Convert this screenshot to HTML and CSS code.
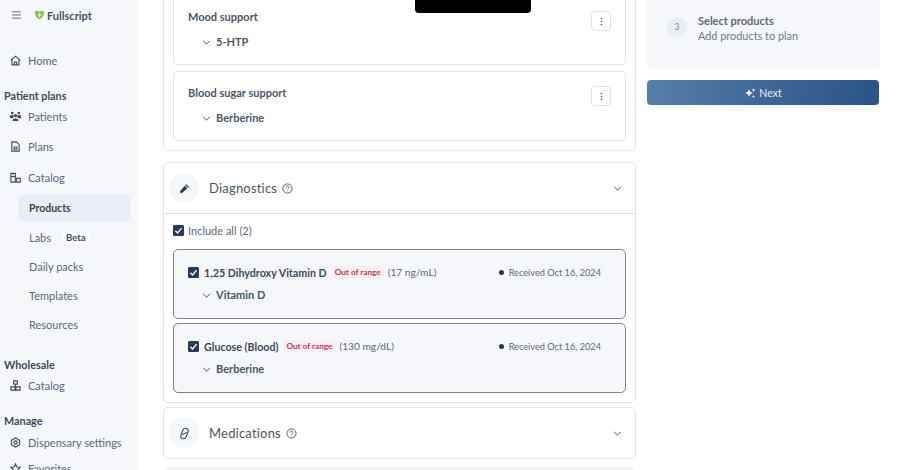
FILE: index.html
```html
<!DOCTYPE html>
<html lang="en">
<head>
<meta charset="utf-8">
<title>Fullscript</title>
<link rel="stylesheet" href="styles.css">
</head>
<body>
<div class="page">
  <aside class="sidebar">
    <div class="brand">
      <svg class="burger" viewBox="0 0 10 8"><path d="M0 .5h10M0 4h10M0 7.500h10"/></svg>
      <svg class="logo" viewBox="0 0 12 11"><path d="M1 1.500C3 .5 4.500 .8 6 2c1.500-1.200 3-1.500 5-.5 .5 4-1.500 7.500-5 9C2.500 9 .5 5.500 1 1.500z" fill="#8fc35a"/><path d="M6 3v5M4 5.500h4" stroke="#e9f3d8" stroke-width="1.200" fill="none"/></svg>
      <span class="brand-name">Fullscript</span>
    </div>
    <nav class="nav">
      <a class="nav-item home">
        <svg class="ico" viewBox="0 0 12 12"><path d="M.8 5.800 6 1.300l5.200 4.500M2.200 4.800v6h7.600v-6M4.700 10.800V7.800h2.600v3"/></svg>Home</a>
      <h2 class="section first">Patient plans</h2>
      <a class="nav-item r-patients">
        <svg class="ico solid" viewBox="0 0 12 12"><circle cx="2.400" cy="2.300" r="1.500"/><circle cx="9.600" cy="2.300" r="1.500"/><circle cx="6" cy="5" r="1.700"/><path d="M0 4.500h4.200v1.500L3 8H0zM12 4.500H7.800v1.500L9 8h3zM2.800 11c0-4 6.400-4 6.400 0z"/></svg>Patients</a>
      <a class="nav-item r-plans">
        <svg class="ico" viewBox="0 0 12 12"><path d="M2 1h5l3 3v7H2zM4.500 6.500h3v2.500h-3z"/></svg>Plans</a>
      <a class="nav-item r-catalog">
        <svg class="ico" viewBox="0 0 12 12"><path d="M1 1.500h4.800V11H1zM1 5h4.800M3 3.300h.8M7.300 7h3.900v4H7.300z"/></svg>Catalog</a>
      <a class="sub active">Products</a>
      <a class="sub labs">Labs <span class="beta">Beta</span></a>
      <a class="sub">Daily packs</a>
      <a class="sub">Templates</a>
      <a class="sub">Resources</a>
      <h2 class="section wholesale">Wholesale</h2>
      <a class="nav-item r-whole">
        <svg class="ico" viewBox="0 0 12 12"><path d="M4 1h4v3.500H4zM1 7.500h4.500V11H1zM6.500 7.500H11V11H6.500zM6 4.500v3"/></svg>Catalog</a>
      <h2 class="section manage">Manage</h2>
      <a class="nav-item r-tight">
        <svg class="ico" viewBox="0 0 12 12"><path d="M6 1l4.500 2.500v5L6 11 1.500 8.500v-5z"/><circle cx="6" cy="6" r="1.800"/></svg>Dispensary settings</a>
      <a class="nav-item r-fav">
        <svg class="ico" viewBox="0 0 12 12"><path d="M6 1l1.500 3.300 3.500.4-2.600 2.400.7 3.500L6 8.900l-3.100 1.700.7-3.500L1 4.700l3.500-.4z"/></svg>Favorites</a>
    </nav>
  </aside>

  <main class="main">
    <div class="redaction"></div>
    <section class="card top-card">
      <div class="goal">
        <div class="goal-text">
          <div class="goal-title">Mood support</div>
          <div class="goal-product"><svg class="chev" viewBox="0 0 10 6"><path d="M1 1l4 4 4-4"/></svg>5-HTP</div>
        </div>
        <button class="more"><svg viewBox="0 0 4 12"><circle cx="2" cy="2" r="1.100"/><circle cx="2" cy="6" r="1.100"/><circle cx="2" cy="10" r="1.100"/></svg></button>
      </div>
      <div class="goal">
        <div class="goal-text">
          <div class="goal-title">Blood sugar support</div>
          <div class="goal-product"><svg class="chev" viewBox="0 0 10 6"><path d="M1 1l4 4 4-4"/></svg>Berberine</div>
        </div>
        <button class="more"><svg viewBox="0 0 4 12"><circle cx="2" cy="2" r="1.100"/><circle cx="2" cy="6" r="1.100"/><circle cx="2" cy="10" r="1.100"/></svg></button>
      </div>
    </section>

    <section class="card diag-card">
      <header class="card-head with-rule">
        <span class="round"><svg viewBox="0 0 12 12" class="solid-ico"><path d="M7.600 1l3.400 3.400-1.100.7-3-3zM6.300 3l2.700 2.700-4.700 4.500c-1 1-2.100 1-2.700.4s-.6-1.700.4-2.700z"/></svg></span>
        <span class="card-title">Diagnostics</span>
        <svg class="help" viewBox="0 0 12 12"><circle cx="6" cy="6" r="5"/><path d="M4.500 4.800C4.500 3 7.500 3 7.500 4.700 7.500 6 6 5.800 6 7"/><path d="M6 8.400v.6"/></svg>
        <svg class="chev head-chev" viewBox="0 0 10 6"><path d="M1 1l4 4 4-4"/></svg>
      </header>
      <div class="diag-body">
        <label class="include"><span class="check"><svg viewBox="0 0 10 10"><path d="M2.200 5.200l2 2 3.600-4.400"/></svg></span>Include all (2)</label>
        <div class="result">
          <div class="result-row">
            <span class="check"><svg viewBox="0 0 10 10"><path d="M2.200 5.200l2 2 3.600-4.400"/></svg></span>
            <span class="result-name">1,25 Dihydroxy Vitamin D</span>
            <span class="badge">Out of range</span>
            <span class="value">(17 ng/mL)</span>
            <span class="received"><i class="dot"></i>Received Oct 16, 2024</span>
          </div>
          <div class="goal-product result-product"><svg class="chev" viewBox="0 0 10 6"><path d="M1 1l4 4 4-4"/></svg>Vitamin D</div>
        </div>
        <div class="result">
          <div class="result-row">
            <span class="check"><svg viewBox="0 0 10 10"><path d="M2.200 5.200l2 2 3.600-4.400"/></svg></span>
            <span class="result-name">Glucose (Blood)</span>
            <span class="badge">Out of range</span>
            <span class="value">(130 mg/dL)</span>
            <span class="received"><i class="dot"></i>Received Oct 16, 2024</span>
          </div>
          <div class="goal-product result-product"><svg class="chev" viewBox="0 0 10 6"><path d="M1 1l4 4 4-4"/></svg>Berberine</div>
        </div>
      </div>
    </section>

    <section class="card med-card">
      <header class="card-head">
        <span class="round"><svg viewBox="0 0 12 12" class="line-ico"><rect x="3.500" y="1" width="5" height="10" rx="2.500" transform="rotate(22 6 6)"/><path d="M3.900 6.900l4.200-1.800"/></svg></span>
        <span class="card-title">Medications</span>
        <svg class="help" viewBox="0 0 12 12"><circle cx="6" cy="6" r="5"/><path d="M4.500 4.800C4.500 3 7.500 3 7.500 4.700 7.500 6 6 5.800 6 7"/><path d="M6 8.400v.6"/></svg>
        <svg class="chev head-chev" viewBox="0 0 10 6"><path d="M1 1l4 4 4-4"/></svg>
      </header>
    </section>
    <section class="card tail-card"></section>
  </main>

  <aside class="side">
    <div class="steps">
      <span class="step-num">3</span>
      <div>
        <div class="step-title">Select products</div>
        <div class="step-sub">Add products to plan</div>
      </div>
    </div>
    <button class="next">
      <svg viewBox="0 0 12 12"><path d="M5 2l1.300 2.700L9 6 6.300 7.300 5 10 3.700 7.300 1 6l2.700-1.300zM9.500 1l.6 1.400 1.400.6-1.400.6-.6 1.400-.6-1.400L7.500 3l1.400-.6zM9.500 8l.5 1 1 .5-1 .5-.5 1-.5-1-1-.5 1-.5z"/></svg>Next
    </button>
  </aside>
</div>
</body>
</html>
```
FILE: styles.css
```css
* { box-sizing: border-box; }
html, body { margin: 0; height: 470px; overflow: hidden; background: #fff; }
body { font-family: Lato, "Noto Sans", sans-serif; color: #3f4a5a; font-size: 11px; }
svg { display: block; }

.page { display: flex; height: 470px; overflow: hidden; }

/* Sidebar */
.sidebar { width: 137px; flex: none; background: #f5f7fb; height: 470px; overflow: hidden; padding: 10px 0 0 4px; }
.brand { display: flex; align-items: center; height: 10px; margin-left: 8px; }
.burger { width: 9px; height: 8px; fill: none; stroke: #5b6673; stroke-width: 1; }
.logo { width: 11px; height: 10px; margin-left: 13px; }
.brand-name { margin-left: 2px; font-size: 11px; font-weight: 700; color: #46535f; }
.nav { display: flex; flex-direction: column; margin-top: 33px; }
.nav-item { display: flex; align-items: center; gap: 7px; margin-left: 6px; height: 14px; color: #5d6877; font-size: 11px; }
.ico { width: 11px; height: 11px; fill: none; stroke: #3f4a5a; stroke-width: 1.200; flex: none; }
.ico.solid { fill: #3f4a5a; stroke: none; }
.section { margin: 0; font-size: 10.800px; font-weight: 700; color: #3f4a5a; line-height: 14px; }
.section.first { margin-top: 22px; }
.r-patients { margin-top: 6px; }
.r-plans { margin-top: 16px; }
.r-catalog { margin-top: 17px; }
.sub { display: flex; align-items: center; margin-left: 14px; width: 112px; height: 26px; padding-left: 11px; margin-top: 3px; color: #5d6877; font-size: 11px; border-radius: 5px; }
.sub.active { margin-top: 11px; background: #e8eef6; color: #3a4656; font-size: 10.500px; font-weight: 700; }
.beta { margin-left: 11px; padding: 1px 4px; background: #fbfcfd; color: #3f4a5a; font-size: 9.500px; font-weight: 700; border-radius: 3px; }
.section.wholesale { margin-top: 21px; }
.r-whole { margin-top: 6px; }
.r-tight { margin-top: 7px; }
.section.manage { margin-top: 22px; }
.r-fav { margin-top: 12px; }

/* Main column */
.main { position: relative; width: 473px; margin-left: 26px; flex: none; }
.redaction { position: absolute; top: 0; left: 252px; width: 116px; height: 13px; background: #000; border-radius: 0 0 4px 4px; z-index: 2; }
.card { border: 1px solid #e1e5ea; border-radius: 5px; background: #fff; }
.top-card { margin-top: -20px; height: 171px; padding: 0 9px; display: flex; flex-direction: column; gap: 6px; border-top: none; }
.goal { border: 1px solid #dfe4ea; border-radius: 4px; height: 70px; display: flex; justify-content: space-between; padding: 14px 14px 0 14px; flex: none; }
.goal:first-child { height: 85px; padding-top: 29px; }
.goal-title { font-size: 11px; font-weight: 700; color: #4c5765; line-height: 14px; }
.goal-product { display: flex; align-items: center; margin: 11px 0 0 14px; font-size: 11px; font-weight: 700; color: #4c5765; line-height: 14px; }
.chev { width: 9px; height: 5px; fill: none; stroke: #4a5564; stroke-width: 1.200; margin-right: 5px; flex: none; }
.more { width: 20px; height: 20px; border: 1px solid #dde2e8; border-radius: 4px; background: #fff; padding: 0; display: flex; align-items: center; justify-content: center; }
.goal:first-child .more { margin-top: 1px; }
.more svg { width: 3px; height: 9px; fill: #3f4a5a; }

.diag-card { margin-top: 11px; height: 241px; }
.card-head { position: relative; display: flex; align-items: center; height: 50px; padding-left: 5px; }
.card-head.with-rule { height: 51px; border-bottom: 1px solid #dfe3e8; }
.round { width: 30px; height: 30px; border-radius: 50%; background: #f5f7fa; display: flex; align-items: center; justify-content: center; flex: none; }
.solid-ico { width: 11px; height: 11px; fill: #2f3a48; }
.line-ico { width: 13px; height: 13px; fill: none; stroke: #3f4a5a; stroke-width: 1; }
.card-title { margin-left: 10px; font-size: 13px; color: #4a5564; letter-spacing: .2px; }
.help { width: 11px; height: 11px; margin-left: 5px; fill: none; stroke: #4a5564; stroke-width: 1; }
.head-chev { margin: 0 13px 0 auto; }
.diag-body { padding: 0 9px; }
.include { display: flex; align-items: center; gap: 4px; height: 35px; padding-bottom: 2px; color: #5d6877; font-size: 11px; }
.check { width: 11px; height: 11px; border-radius: 1.500px; background: #273a56; flex: none; }
.check svg { width: 11px; height: 11px; fill: none; stroke: #fff; stroke-width: 1.200; }
.result { height: 70px; margin-bottom: 4px; background: #f5f7fb; border: 1px solid #7b8490; border-radius: 5px; padding: 15px 24px 0 14px; }
.result-row { display: flex; align-items: center; height: 14px; }
.result-name { margin-left: 5px; font-size: 10.700px; font-weight: 700; color: #3f4a5a; }
.badge { margin-left: 5px; padding: 1px 3px; background: #fdeff1; color: #c23a55; font-size: 8.200px; font-weight: 700; border-radius: 2px; }
.value { margin-left: 4px; font-size: 10.200px; color: #5d6877; }
.received { margin-left: auto; display: flex; align-items: center; font-size: 9.200px; color: #5d6877; }
.dot { width: 5px; height: 5px; border-radius: 50%; background: #2a3442; margin-right: 5px; }
.result-product { margin-top: 9px; }
.med-card { margin-top: 4px; height: 52px; }
.tail-card { margin-top: 9px; height: 40px; }

/* Right column */
.side { width: 233px; margin-left: 11px; flex: none; }
.steps { height: 69px; background: #f5f7fb; display: flex; align-items: flex-start; padding: 13px 0 0 20px; gap: 11px; border-radius: 0 0 4px 4px; }
.step-num { width: 20px; height: 20px; border-radius: 50%; background: #e8eef6; color: #7a8592; display: flex; align-items: center; justify-content: center; font-size: 8.500px; flex: none; margin-top: 4px; }
.step-title { font-size: 11px; font-weight: 700; color: #5d6877; line-height: 15px; }
.step-sub { font-size: 10.900px; color: #6f7a87; line-height: 15px; }
.next { display: flex; align-items: center; justify-content: center; gap: 3px; width: 232px; height: 25px; margin-top: 11px; border: none; border-radius: 4px; background: linear-gradient(100deg, #5680aa 0%, #41699a 45%, #2a5485 100%); color: #e8eef5; font: inherit; font-size: 10.500px; }
.next svg { width: 12px; height: 12px; fill: #e8eef5; }
```
